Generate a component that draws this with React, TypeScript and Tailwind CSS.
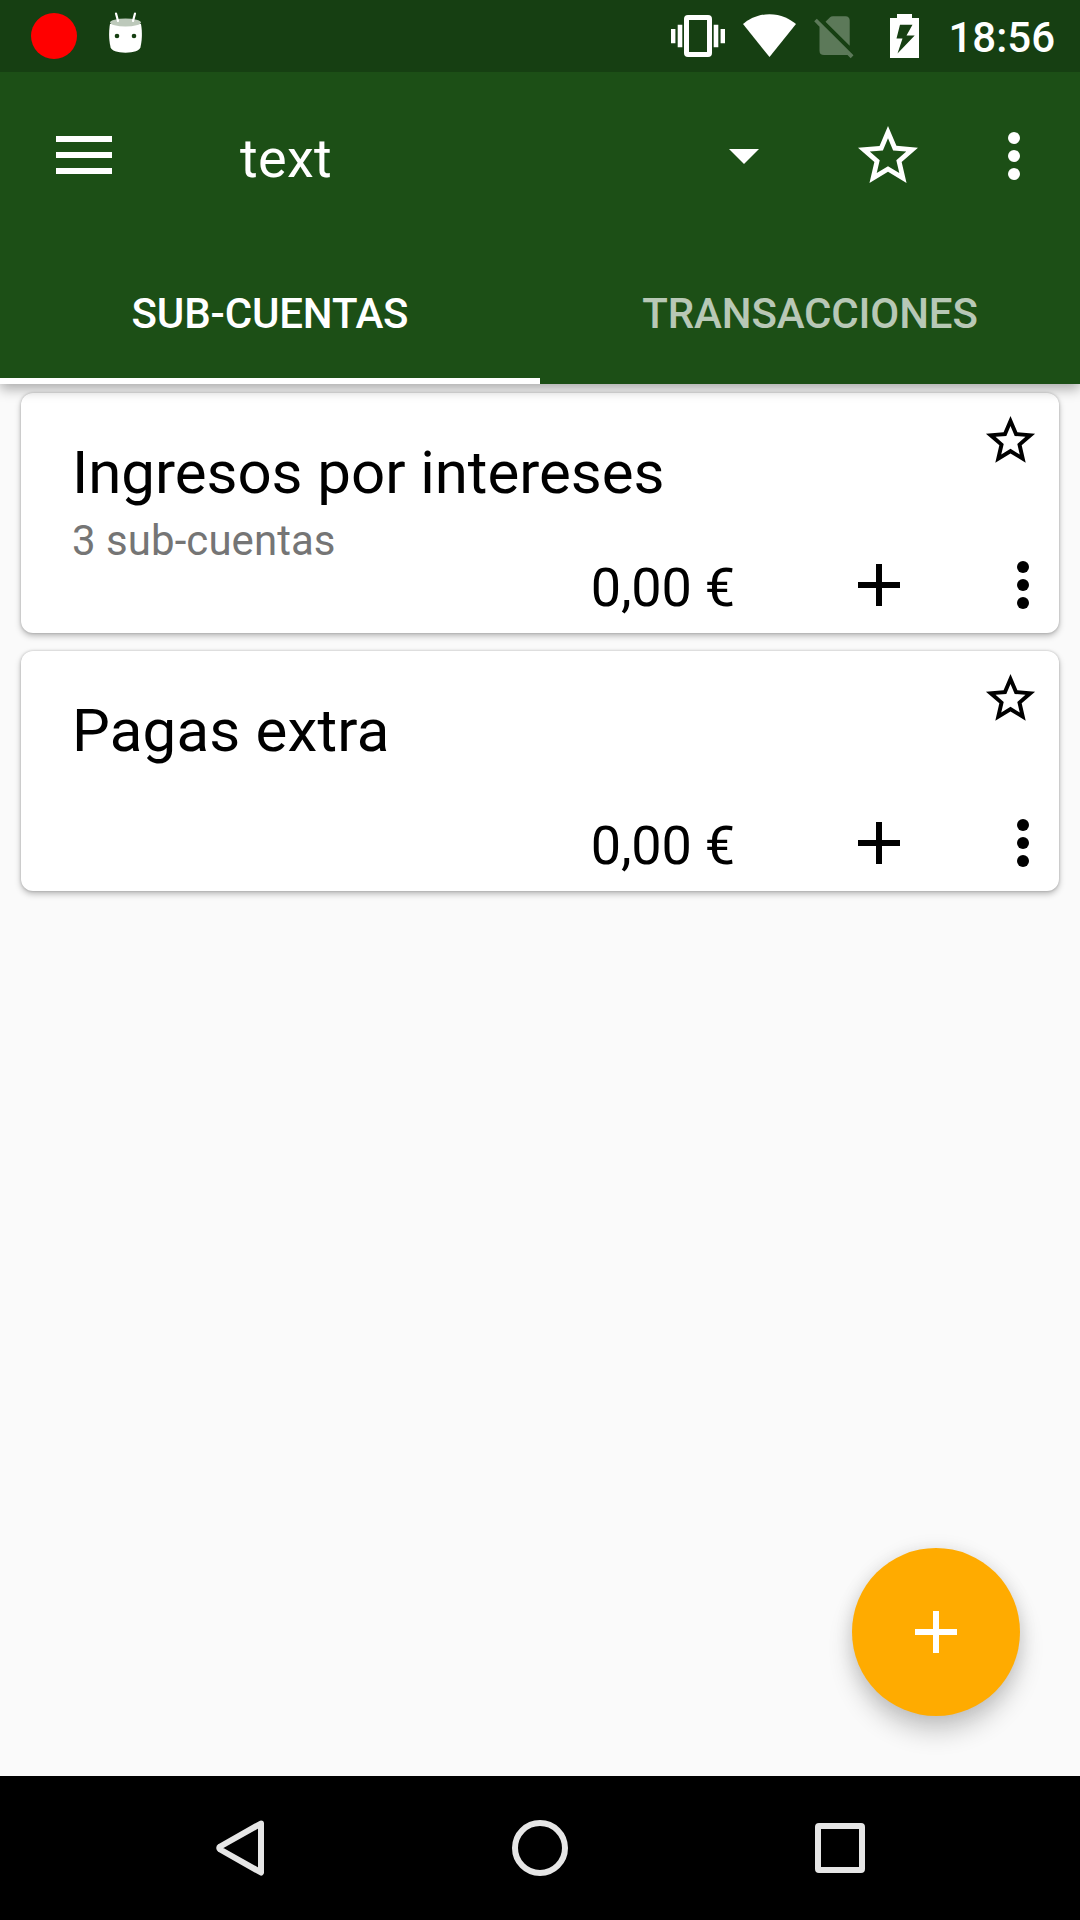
import React from "react";

const STAR =
  "M22 9.24l-7.19-.62L12 2 9.19 8.63 2 9.24l5.46 4.73L5.82 21 12 17.27 18.18 21l-1.63-7.03L22 9.24zM12 15.4l-3.76 2.27 1-4.28-3.32-2.88 4.38-.38L12 6.1l1.71 4.04 4.38.38-3.32 2.88 1 4.28L12 15.4z";

function Star({ className }: { className: string }) {
  return (
    <svg viewBox="0 0 24 24" fill="currentColor" className={className}>
      <path d={STAR} />
    </svg>
  );
}

function Dots() {
  return (
    <svg viewBox="0 0 12 48" fill="currentColor" className="h-12 w-3 shrink-0">
      <circle cx="6" cy="6" r="6" />
      <circle cx="6" cy="24" r="6" />
      <circle cx="6" cy="42" r="6" />
    </svg>
  );
}

function Plus() {
  return (
    <svg viewBox="0 0 42 42" fill="currentColor" className="size-[42px] shrink-0">
      <path d="M18 0h6v18h18v6H24v18h-6V24H0v-6h18z" />
    </svg>
  );
}

function StatusBar() {
  return (
    <div className="flex h-[72px] items-center bg-[#163f12] pr-[25px] pl-[31px]">
      <div className="size-[46px] rounded-full bg-[#ff0000]" />
      <svg viewBox="0 0 36 42" className="-mt-[7px] ml-[31px] h-[42px] w-9">
        <path
          d="M2 12C1 18 .4 26 2.6 35.500C3.500 38.500 9 40.700 17.500 40.700C26 40.700 31.500 38.500 32.400 35.500C34.600 26 34 18 33 12z"
          fill="#fff"
        />
        <ellipse cx="17.500" cy="10.500" rx="15.500" ry="4" fill="#bdc9bb" />
        <path d="M8 1.500L10 9M27 1.500L25 9" stroke="#fff" strokeWidth="2.200" strokeLinecap="round" />
        <circle cx="9" cy="24" r="2.300" fill="#163f12" />
        <circle cx="26" cy="24" r="2.300" fill="#163f12" />
      </svg>
      <svg viewBox="0 0 54 42" fill="#fff" className="ml-auto h-[42px] w-[54px]">
        <path d="M0 14h4.400v14.300H0zM6.700 9.700h4.600v22.600H6.700zM42.700 9.700h4.600v22.600h-4.600zM49.600 14H54v14.300h-4.400z" />
        <path
          fillRule="evenodd"
          d="M17 0h20a4 4 0 0 1 4 4v34a4 4 0 0 1-4 4H17a4 4 0 0 1-4-4V4a4 4 0 0 1 4-4zm1 5v32h18V5z"
        />
      </svg>
      <svg viewBox="0 0 54 43" fill="#fff" className="-mt-px ml-[18px] h-[43px] w-[54px]">
        <path d="M0 10C6 5 15 .2 26.500 .2S47 5 53 10L26.500 43z" />
      </svg>
      <svg viewBox="0 0 40 43" fill="#fff" fillOpacity=".3" className="mt-[2px] ml-[17px] h-[43px] w-10">
        <path d="M11.500 5.800L15.800 1.500Q17 .3 19 .3H31.500Q35.700 .5 35.700 4.500V29.700z" />
        <path d="M.2 5.200L2.800 2.700L39.500 39.300L36.700 42.200L33.500 39H10Q5.500 39 5.500 34.700V10.800z" />
      </svg>
      <svg viewBox="0 0 29 44" fill="#fff" className="ml-[36px] h-11 w-[29px]">
        <path
          fillRule="evenodd"
          d="M7 0h15v4h7v40H0V4h7zM10 10.700L6.500 24.500H12.500L7.500 39.500L24.700 21.500H16.500L22.500 10.700z"
        />
      </svg>
      <span className="relative top-[2px] ml-[29px] text-[42px] leading-none font-medium text-white">18:56</span>
    </div>
  );
}

function Toolbar() {
  return (
    <div className="flex h-[168px] items-center pr-[60px] pl-14">
      <svg viewBox="0 0 56 38" fill="#fff" className="-mt-[2px] h-[38px] w-14">
        <path d="M0 0h56v6H0zM0 16h56v6H0zM0 32h56v6H0z" />
      </svg>
      <span className="mt-[5px] ml-32 text-[54px] leading-none tracking-[0.3px]">text</span>
      <svg viewBox="0 0 30 15" fill="#fff" className="mt-px ml-auto h-[15px] w-[30px]">
        <path d="M0 0h30L15 15z" />
      </svg>
      <Star className="ml-[93px] size-[72px]" />
      <div className="ml-[84px]">
        <Dots />
      </div>
    </div>
  );
}

interface AccountProps {
  name: string;
  detail?: string;
  nameClass: string;
}

function Account({ name, detail, nameClass }: AccountProps) {
  return (
    <article className="flex h-60 rounded-xl bg-white pl-[51px] text-black shadow-[0_3px_6px_rgba(0,0,0,0.26),0_0_3px_rgba(0,0,0,0.22)]">
      <div className="w-0 grow pt-[49px]">
        <h2 className={`text-[60px] leading-[62px] font-normal whitespace-nowrap ${nameClass}`}>{name}</h2>
        {detail && (
          <p className="mt-[12px] text-[42px] leading-[50px] tracking-[0.05px] whitespace-nowrap text-[#757575]">
            {detail}
          </p>
        )}
      </div>
      <div className="flex flex-col items-end justify-between pt-[18px] pb-[18px]">
        <Star className="mr-[19px] size-[59px]" />
        <div className="flex h-[60px] items-center pr-[30px]">
          <span className="mt-[5px] text-[54px] leading-none tracking-[-0.2px] whitespace-nowrap">0,00 €</span>
          <div className="mr-[117px] ml-[123px]">
            <Plus />
          </div>
          <Dots />
        </div>
      </div>
    </article>
  );
}

function NavBar() {
  return (
    <nav className="flex h-36 items-center justify-between bg-black pr-[215px] pl-[215px]">
      <svg viewBox="0 0 50 56" fill="none" stroke="#e6e6e6" strokeWidth="6" strokeLinejoin="round" className="h-14 w-[50px]">
        <path d="M46 3.500L5.200 26.500Q3.200 28 5.200 29.500L46 52.500z" />
      </svg>
      <div className="size-14 rounded-full border-[6px] border-[#e6e6e6]" />
      <div className="size-[50px] rounded-[4px] border-[6px] border-[#e6e6e6]" />
    </nav>
  );
}

export default function App() {
  return (
    <div className="relative flex h-[1920px] w-[1080px] flex-col overflow-hidden bg-[#fafafa] font-['Roboto',sans-serif]">
      <header className="relative z-10 bg-[#1c4f16] text-white shadow-[0_5px_12px_rgba(0,0,0,0.32)]">
        <StatusBar />
        <Toolbar />
        <div className="grid h-36 grid-cols-2 text-center text-[42px] leading-[148px] font-medium tracking-[-0.15px]">
          <div className="h-36 border-b-[6px] border-white">SUB-CUENTAS</div>
          <div className="text-white/70">TRANSACCIONES</div>
        </div>
      </header>
      <main className="flex flex-1 flex-col gap-[18px] px-[21px] pt-[9px]">
        <Account name="Ingresos por intereses" detail="3 sub-cuentas" nameClass="tracking-[-0.05px]" />
        <Account name="Pagas extra" nameClass="tracking-[0.2px]" />
      </main>
      <button className="absolute top-[1548px] left-[852px] flex size-[168px] items-center justify-center rounded-full bg-[#ffab00] text-white shadow-[0_16px_24px_rgba(0,0,0,0.19),0_1px_18px_rgba(0,0,0,0.1)]">
        <Plus />
      </button>
      <NavBar />
    </div>
  );
}
